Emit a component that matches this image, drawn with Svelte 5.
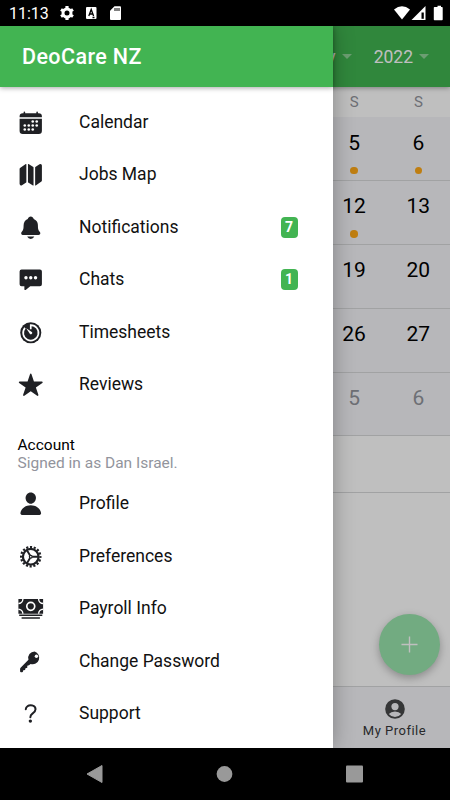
<script lang="ts">
	type Item = { id: string; label: string; badge?: number };

	const menu: Item[] = [
		{ id: 'calendar', label: 'Calendar' },
		{ id: 'map', label: 'Jobs Map' },
		{ id: 'bell', label: 'Notifications', badge: 7 },
		{ id: 'chat', label: 'Chats', badge: 1 },
		{ id: 'timer', label: 'Timesheets' },
		{ id: 'star', label: 'Reviews' },
	];

	const account: Item[] = [
		{ id: 'person', label: 'Profile' },
		{ id: 'cog', label: 'Preferences' },
		{ id: 'cash', label: 'Payroll Info' },
		{ id: 'key', label: 'Change Password' },
		{ id: 'help', label: 'Support' },
	];

	const weeks = [
		[{ day: 5, event: true }, { day: 6, event: true }],
		[{ day: 12, event: true }, { day: 13 }],
		[{ day: 19 }, { day: 20 }],
		[{ day: 26 }, { day: 27 }],
		[{ day: 5, muted: true }, { day: 6, muted: true }],
	] as { day: number; event?: boolean; muted?: boolean }[][];
</script>

{#snippet icon(id: string)}
	<svg class="icon" viewBox="0 0 512 512" aria-hidden="true">
		{#if id === 'calendar'}
			<path d="M480 128a64 64 0 00-64-64h-16V48a16 16 0 00-32 0v16H144V48a16 16 0 00-32 0v16H96a64 64 0 00-64 64v16h448zM32 416a64 64 0 0064 64h320a64 64 0 0064-64V176H32z" />
			<g fill="#fff">
				{#each [[296, 232], [376, 232], [136, 312], [216, 312], [296, 312], [376, 312], [136, 392], [216, 392], [296, 392]] as [cx, cy]}
					<circle {cx} {cy} r="26" />
				{/each}
			</g>
		{:else if id === 'map'}
			<path d="M48 113a32 32 0 00-16 28v297a32 32 0 0048 28l84-55a8 8 0 004-7V46a8 8 0 00-12-6zM212 39a8 8 0 00-12 7v358a8 8 0 004 6l96 63a8 8 0 0012-7V109a8 8 0 00-4-7zM464 46a32 32 0 00-32 0l-84 55a8 8 0 00-4 7v358a8 8 0 0012 6l107-73a32 32 0 0017-28V75a32 32 0 00-16-29z" />
		{:else if id === 'bell'}
			<path d="M440 341l-5-6c-22-26-35-42-35-118 0-39-9-71-28-95-13-17-32-31-56-41-9-30-33-49-60-49s-51 19-60 49c-56 23-84 68-84 136 0 76-13 92-35 118l-5 6a35 35 0 00-5 38c6 13 20 21 35 21h308c15 0 28-8 35-21a35 35 0 00-5-38zM256 480a80 80 0 0070-42 4 4 0 00-3-6H189a4 4 0 00-3 6 80 80 0 0070 42z" />
		{:else if id === 'chat'}
			<path d="M440 48H72a40 40 0 00-40 40v256a40 40 0 0040 40h56v64a16 16 0 0026 12l92-76h194a40 40 0 0040-40V88a40 40 0 00-40-40z" />
			<g fill="#fff">
				<circle cx="160" cy="216" r="34" />
				<circle cx="256" cy="216" r="34" />
				<circle cx="352" cy="216" r="34" />
			</g>
		{:else if id === 'timer'}
			<circle cx="256" cy="256" r="212" />
			<path d="M256 184v-80a154 154 0 11-116 54" fill="none" stroke="#fff" stroke-width="34" />
			<path d="M166 164l118 80a32 32 0 01-40 42l-80-118z" fill="#fff" />
		{:else if id === 'star'}
			<path d="M394 480a16 16 0 01-9-3l-129-93-129 93a16 16 0 01-24-18l50-149L23 221a16 16 0 019-29h160l49-149a16 16 0 0130 0l49 149h160a16 16 0 019 29l-130 89 50 149a16 16 0 01-15 21z" />
		{:else if id === 'person'}
			<path d="M333 65C313 44 286 32 256 32s-57 12-77 32c-20 22-29 50-27 81 5 61 51 111 104 111s99-50 104-111c2-31-8-59-27-80zM432 480H80a31 31 0 01-24-11c-7-8-9-18-7-29 8-47 34-86 76-114 37-24 83-38 131-38s94 14 131 38c42 28 68 67 76 114 2 11 0 21-7 29a31 31 0 01-24 11z" />
		{:else if id === 'cog'}
			<g fill="none" stroke="currentColor">
				<circle cx="256" cy="256" r="158" stroke-width="46" />
				<circle cx="256" cy="256" r="194" stroke-width="44" pathLength="96" stroke-dasharray="3.4 2.6" stroke-dashoffset="1.700" />
				<circle cx="256" cy="256" r="28" stroke-width="24" />
				<path d="M284 256h130M242 232l-65-113M242 280l-65 113" stroke-width="38" />
			</g>
		{:else if id === 'cash'}
			<path d="M8 60h496v296H8zM24 370h464v30H24zM72 428h368v30H72z" />
			<g fill="none" stroke="#fff" stroke-width="28">
				<circle cx="256" cy="208" r="80" stroke-width="34" />
				<path d="M8 150a90 90 0 0090-90M504 150a90 90 0 01-90-90M8 266a90 90 0 0190 90M504 266a90 90 0 00-90 90" />
			</g>
		{:else if id === 'key'}
			<path d="M334 48a130 130 0 00-124 168L52 374c-10 10-10 18-10 30v44q0 20 20 20h20c10 0 16-6 18-16l6-24 36-8 8-36 36-10v-38l34-10 34-26a130 130 0 1080-252z" />
			<circle cx="370" cy="146" r="34" fill="#fff" />
		{:else if id === 'help'}
			<path d="M156 164s1-33 34-59c19-16 43-21 66-21 18 0 35 3 45 8 18 8 51 28 51 72 0 46-29 66-62 89s-42 45-42 71" fill="none" stroke="currentColor" stroke-width="40" stroke-linecap="round" />
			<circle cx="248" cy="404" r="34" />
		{/if}
	</svg>
{/snippet}

{#snippet rows(items: Item[])}
	<ul>
		{#each items as { id, label, badge } (id)}
			<li>
				{@render icon(id)}
				<span class="label">{label}</span>
				{#if badge}
					<span class="badge">{badge}</span>
				{/if}
			</li>
		{/each}
	</ul>
{/snippet}

<div class="screen">
	<div class="status">
		<span class="clock">11:13</span>
		<svg class="left-icons" viewBox="0 0 62 16" aria-hidden="true">
			<g fill="none" stroke="#fff">
				<circle cx="8" cy="8" r="4" stroke-width="3" />
				<path d="M8 1v3M8 12v3M2 4.500l2.500 1.500M11.500 10l2.500 1.500M2 11.500l2.500-1.500M11.500 6l2.500-1.500" stroke-width="3.200" />
			</g>
			<rect x="27" y="2" width="10.500" height="12" rx="1" fill="#fff" />
			<path d="M29.800 11l2.400-6.500 2.400 6.500M30.700 9h3M33.500 12.500h2" fill="none" stroke="#000" stroke-width="1.300" />
			<path d="M55.500 1.200h5.500q1 0 1 1V14q0 1-1 1H52q-1 0-1-1V5.800z" fill="#fff" />
			<path d="M56 3v3M58 3v3M60 3v3" stroke="#000" stroke-width="1" />
		</svg>
		<svg class="right-icons" viewBox="0 0 52 16" aria-hidden="true">
			<path d="M0 4.500q8-6.600 16 0L8 14.500z" fill="#fff" />
			<path d="M31.500 1v14H17.500z" fill="#fff" />
			<path d="M27.500 7.500h2.300v6.300h-2.300z" fill="#000" />
			<path d="M42 2h1.500V.800h3.500V2h1q.700 0 .700.700V14.500q0 .700-.700.700H40.500q-.700 0-.700-.700V2.700q0-.700.700-.700z" fill="#fff" />
		</svg>
	</div>

	<main>
		<div class="page">
			<header class="toolbar">
				<span>February</span>
				<i class="caret"></i>
				<span class="year">2022</span>
				<i class="caret"></i>
			</header>
			<div class="week names">
				<span>S</span>
				<span>S</span>
			</div>
			{#each weeks as week}
				<div class="week days">
					{#each week as { day, event, muted }}
						<div class="day" class:muted>
							<span>{day}</span>
							{#if event}<i class="dot"></i>{/if}
						</div>
					{/each}
				</div>
			{/each}
			<div class="agenda"></div>
			<div class="empty">
				<button class="fab" aria-label="Add">
					<svg viewBox="0 0 18 18"><path d="M9 .500v17M.500 9h17" stroke="#fff" stroke-width="1.500" /></svg>
				</button>
			</div>
			<footer>
				<div class="tab">
					<svg viewBox="0 0 20 20" aria-hidden="true">
						<circle cx="10" cy="10" r="9.800" fill="#47484a" />
						<circle cx="10" cy="7.600" r="3.600" fill="#f4f5f8" />
						<path d="M3.800 15q2.200-2.600 6.200-2.600t6.200 2.600q-2.400 3-6.200 3t-6.200-3z" fill="#f4f5f8" />
					</svg>
					<span>My Profile</span>
				</div>
			</footer>
		</div>

		<div class="backdrop"></div>

		<aside>
			<header class="title">DeoCare NZ</header>
			{@render rows(menu)}
			<div class="account">
				<div>Account</div>
				<div class="signed">Signed in as Dan Israel.</div>
			</div>
			{@render rows(account)}
		</aside>
	</main>

	<nav>
		<svg viewBox="0 0 16 18"><path d="M15.500.500v17L.500 9z" fill="#999" stroke="#999" stroke-linejoin="round" /></svg>
		<svg viewBox="0 0 16 18"><circle cx="8" cy="9" r="7.900" fill="#999" /></svg>
		<svg viewBox="0 0 17 18"><rect y=".500" width="17" height="17" rx="1" fill="#999" /></svg>
	</nav>
</div>

<style>
	:global(body) {
		margin: 0;
	}

	.screen {
		display: flex;
		flex-direction: column;
		width: 450px;
		height: 800px;
		overflow: hidden;
		background: #000;
		color: #000;
		font-family: Roboto, sans-serif;
	}

	.status {
		display: flex;
		align-items: center;
		height: 26px;
		flex: none;
		padding: 1px 8px 0 9px;
		box-sizing: border-box;
		color: #fff;
	}

	.clock {
		width: 50px;
		font-size: 16px;
		line-height: 25px;
		white-space: nowrap;
	}

	.left-icons {
		width: 62px;
		height: 16px;
		margin: 0 0 1px;
	}

	.right-icons {
		width: 52px;
		height: 16px;
		margin: 0 -4px 1px auto;
	}

	main {
		position: relative;
		flex: 1;
		overflow: hidden;
		background: #fff;
	}

	.page {
		display: flex;
		flex-direction: column;
		height: 100%;
	}

	.toolbar {
		position: relative;
		display: flex;
		align-items: center;
		justify-content: flex-end;
		height: 61px;
		flex: none;
		padding-right: 21px;
		box-sizing: border-box;
		background: #40b450;
		box-shadow: 0 1px 5px rgba(0, 0, 0, 0.35);
		color: #fff;
		font-size: 17.5px;
	}

	.year {
		margin-left: 22px;
	}

	.caret {
		margin-left: 6px;
		border: 5.500px solid transparent;
		border-top-color: rgba(255, 255, 255, 0.42);
		border-bottom: 0;
	}

	.week {
		display: flex;
		justify-content: flex-end;
		flex: none;
		box-sizing: border-box;
	}

	.names {
		height: 30px;
		color: #92949c;
		font-size: 15px;
		line-height: 30px;
		text-align: center;
	}

	.names span,
	.day {
		width: 64.280px;
		padding-left: 1px;
		box-sizing: border-box;
	}

	.days {
		height: 63.900px;
		background: #f4f5f8;
		border-bottom: 1px solid #d7d8da;
	}

	.day {
		display: flex;
		flex-direction: column;
		align-items: center;
		padding-top: 13.500px;
		font-size: 21px;
		line-height: 25px;
	}

	.muted {
		color: #92949c;
	}

	.dot {
		width: 7.500px;
		height: 7.500px;
		margin-top: 11px;
		border-radius: 50%;
		background: #ffa817;
	}

	.agenda {
		height: 56.500px;
		flex: none;
		box-sizing: border-box;
		border-bottom: 1px solid #d7d8da;
	}

	.empty {
		display: flex;
		flex: 1;
		align-items: flex-end;
		justify-content: flex-end;
		padding: 0 10px 11px 0;
	}

	.fab {
		display: flex;
		align-items: center;
		justify-content: center;
		width: 61px;
		height: 61px;
		padding: 0;
		border: 0;
		border-radius: 50%;
		background: #98e4ac;
		box-shadow: 0 3px 8px rgba(0, 0, 0, 0.28);
	}

	.fab svg {
		width: 17px;
		height: 17px;
	}

	footer {
		display: flex;
		justify-content: flex-end;
		height: 62px;
		flex: none;
		box-sizing: border-box;
		border-top: 1px solid #d7d8da;
		background: #f4f5f8;
	}

	.tab {
		display: flex;
		flex-direction: column;
		align-items: center;
		width: 111px;
		padding-top: 12px;
		box-sizing: border-box;
		color: #36373a;
		font-size: 13px;
		line-height: 15px;
		letter-spacing: 0.5px;
	}

	.tab svg {
		width: 20px;
		height: 20px;
		margin-bottom: 4px;
	}

	.backdrop {
		position: absolute;
		inset: 0;
		background: rgba(0, 0, 0, 0.25);
	}

	aside {
		position: absolute;
		top: 0;
		left: 0;
		width: 332.500px;
		height: 100%;
		background: #fff;
		box-shadow: 0 0 20px rgba(0, 0, 0, 0.3);
	}

	.title {
		height: 61px;
		padding-left: 22px;
		background: #42b452;
		box-shadow: 0 1px 5px rgba(0, 0, 0, 0.35);
		color: #fff;
		font-size: 21.500px;
		font-weight: 500;
		line-height: 62px;
		letter-spacing: 0.4px;
	}

	ul {
		margin: 0;
		padding: 9px 0 0;
		list-style: none;
	}

	li {
		display: flex;
		align-items: center;
		height: 52.500px;
		padding: 0 35px 0 18px;
	}

	.icon {
		width: 25.500px;
		height: 25.500px;
		margin-right: 35.500px;
		fill: currentColor;
		color: #1f2024;
	}

	.label {
		flex: 1;
		padding-bottom: 1px;
		font-size: 17.500px;
		color: #111;
	}

	.badge {
		width: 17px;
		border-radius: 4px;
		background: #42b452;
		color: #fff;
		font-size: 14px;
		font-weight: 700;
		line-height: 21px;
		text-align: center;
	}

	.account {
		padding: 24.500px 17.500px 0;
		font-size: 15.500px;
		line-height: 18px;
	}

	.account + ul {
		padding-top: 6px;
	}

	.signed {
		color: #92949c;
	}

	nav {
		display: flex;
		align-items: center;
		justify-content: space-between;
		height: 52px;
		flex: none;
		padding: 0 87px 0 86px;
	}

	nav svg {
		width: 17px;
		height: 18px;
	}
</style>
